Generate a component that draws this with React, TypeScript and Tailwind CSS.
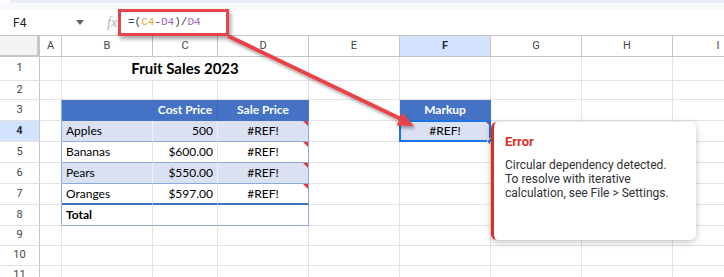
import React from 'react';

const colW = ['w-[22px]', 'w-[91px]', 'w-[65px]', 'w-[91px]', 'w-[91px]', 'w-[91px]', 'w-[91px]', 'w-[91px]', 'w-[91px]'];
const colNames = ['A', 'B', 'C', 'D', 'E', 'F', 'G', 'H', 'I'];
const rowH = ['h-[24px]', 'h-[19px]', 'h-[21px]', 'h-[21px]', 'h-[21px]', 'h-[21px]', 'h-[21px]', 'h-[21px]', 'h-[20px]', 'h-[20px]', 'h-[20px]'];

const fruits: Record<number, [string, string]> = {
  4: ['Apples', '500'],
  5: ['Bananas', '$600.00'],
  6: ['Pears', '$550.00'],
  7: ['Oranges', '$597.00'],
};

const base = 'shrink-0 h-full relative flex items-center px-[4px] whitespace-nowrap border-r border-b border-[#e2e2e2]';

function ErrorMark() {
  return (
    <span className="absolute top-0 right-0 w-0 h-0 border-l-[5px] border-l-transparent border-t-[5px] border-t-[#e53935]" />
  );
}

function Cell({ w, cls = '', children }: { w: string; cls?: string; children?: React.ReactNode }) {
  return <div className={`${base} ${w} ${cls}`}>{children}</div>;
}

function tableEdge(r: number) {
  if (r === 7) return 'border-b-2 border-b-[#4472c4]';
  if (r >= 4 && r <= 8) return 'border-b-[#8eaadb]';
  return '';
}

function Row({ r }: { r: number }) {
  const banded = r === 4 || r === 6;
  const cells: React.ReactNode[] = [];

  // column A
  cells.push(<Cell key="A" w={colW[0]} cls={r >= 3 && r <= 8 ? 'border-r-[#8eaadb]' : ''} />);

  if (r === 1) {
    cells.push(
      <Cell key="BD" w="w-[247px]" cls="justify-center font-bold text-[15px]">
        Fruit Sales 2023
      </Cell>
    );
  } else if (r === 3) {
    cells.push(<Cell key="B" w={colW[1]} cls="bg-[#4472c4] border-b-[#4472c4] border-r-[#4472c4]" />);
    cells.push(
      <Cell key="C" w={colW[2]} cls="bg-[#4472c4] border-b-[#4472c4] border-r-[#3d66b0] justify-center text-white font-bold">
        Cost Price
      </Cell>
    );
    cells.push(
      <Cell key="D" w={colW[3]} cls="bg-[#4472c4] border-b-[#4472c4] border-r-[#4472c4] justify-center text-white font-bold">
        Sale Price
      </Cell>
    );
  } else if (r >= 4 && r <= 7) {
    const [name, cost] = fruits[r];
    const bg = banded ? 'bg-[#d9e1f2] border-r-[#eef1f8]' : '';
    cells.push(
      <Cell key="B" w={colW[1]} cls={`${bg} ${tableEdge(r)}`}>
        {name}
      </Cell>
    );
    cells.push(
      <Cell key="C" w={colW[2]} cls={`${bg} ${tableEdge(r)} justify-end px-[2px]`}>
        {cost}
      </Cell>
    );
    cells.push(
      <Cell key="D" w={colW[3]} cls={`${banded ? 'bg-[#d9e1f2]' : ''} border-r-[#8eaadb] ${tableEdge(r)} justify-center`}>
        #REF!
        <ErrorMark />
      </Cell>
    );
  } else if (r === 8) {
    cells.push(
      <Cell key="B" w={colW[1]} cls={`${tableEdge(r)} font-bold`}>
        Total
      </Cell>
    );
    cells.push(<Cell key="C" w={colW[2]} cls={tableEdge(r)} />);
    cells.push(<Cell key="D" w={colW[3]} cls={`${tableEdge(r)} border-r-[#8eaadb]`} />);
  } else {
    cells.push(<Cell key="B" w={colW[1]} />);
    cells.push(<Cell key="C" w={colW[2]} />);
    cells.push(<Cell key="D" w={colW[3]} />);
  }

  // column E
  cells.push(<Cell key="E" w={colW[4]} />);

  // column F
  if (r === 3) {
    cells.push(
      <Cell key="F" w={colW[5]} cls="bg-[#4472c4] border-b-[#4472c4] border-r-[#4472c4] justify-center text-white font-bold">
        Markup
      </Cell>
    );
  } else if (r === 4) {
    cells.push(
      <Cell key="F" w={colW[5]} cls="bg-[#d9e1f2] justify-center">
        #REF!
        <ErrorMark />
        <span className="absolute -left-px -top-px -right-px -bottom-px border-2 border-[#1a73e8]" />
        <span className="absolute -right-[4px] -bottom-[4px] w-[7px] h-[7px] rounded-full bg-[#1a73e8] border border-white" />
      </Cell>
    );
  } else {
    cells.push(<Cell key="F" w={colW[5]} />);
  }

  cells.push(<Cell key="G" w={colW[6]} />);
  cells.push(<Cell key="H" w={colW[7]} />);
  cells.push(<Cell key="I" w={colW[8]} />);

  const sel = r === 4;
  return (
    <div className={`flex ${rowH[r - 1]}`}>
      <div
        className={`shrink-0 w-[40px] h-full flex items-center justify-center text-[11px] border-r border-b border-r-[#c4c7c5] border-b-[#e2e2e2] font-['Roboto',sans-serif] ${
          sel ? 'bg-[#d3e3fd] font-bold text-[#1f2a44]' : 'text-[#444746]'
        }`}
      >
        {r}
      </div>
      {cells}
    </div>
  );
}

export default function App() {
  return (
    <div className="relative w-[724px] h-[277px] overflow-hidden bg-white text-[12px] text-black font-['Lato',sans-serif]">
      {/* toolbar remnant */}
      <div className="h-[3px] bg-[#e9eef6] ml-[10px]" />
      <div className="h-[7px] bg-[#f8fafd]" />

      {/* formula bar */}
      <div className="h-[25px] flex items-center font-['Roboto',sans-serif]">
        <div className="w-[76px] pl-[13px] text-[12px] text-[#1f1f1f]">F4</div>
        <svg width="8" height="5" viewBox="0 0 8 5" className="shrink-0">
          <path d="M0 0 L8 0 L4 5 Z" fill="#5f6368" />
        </svg>
        <div className="ml-[23px] w-[21px] text-[14px] italic text-[#b0b3b8] font-['Liberation_Serif',serif]">fx</div>
        <div className="text-[11px] font-['Liberation_Mono',monospace] text-[#3c4043]">
          =(<span className="text-[#f29d38]">C4</span>-<span className="text-[#9f5fbe]">D4</span>)/<span className="text-[#9f5fbe]">D4</span>
        </div>
      </div>

      {/* column headers */}
      <div className="flex h-[22px] border-t border-[#c4c7c5] font-['Roboto',sans-serif] text-[11px] text-[#444746]">
        <div className="shrink-0 w-[40px] h-full bg-[#f3f3f3] border-r-[3px] border-b-2 border-[#c4c7c5]" />
        {colNames.map((c, i) => (
          <div
            key={c}
            className={`shrink-0 ${colW[i]} h-full flex items-center justify-center border-r border-b border-[#c4c7c5] ${
              c === 'F' ? 'bg-[#d3e3fd] font-bold text-[#1f2a44]' : ''
            }`}
          >
            {c}
          </div>
        ))}
      </div>

      {/* rows */}
      {Array.from({ length: 11 }, (_, i) => (
        <Row key={i} r={i + 1} />
      ))}

      {/* annotation: red box round formula */}
      <div className="absolute left-[118px] top-[9px] w-[111px] h-[27px] border-[3px] border-[#e8434a] shadow-[2px_3px_4px_rgba(0,0,0,0.35)] z-10" />

      {/* annotation: arrow */}
      <svg className="absolute inset-0 z-20 pointer-events-none" width="724" height="277">
        <defs>
          <filter id="sh" x="-10%" y="-10%" width="130%" height="140%">
            <feDropShadow dx="1.5" dy="2.5" stdDeviation="1.5" floodColor="#000" floodOpacity="0.35" />
          </filter>
        </defs>
        <g filter="url(#sh)">
          <line x1="228" y1="36" x2="401" y2="119" stroke="#e8434a" strokeWidth="4" />
          <polygon points="414,126 396.6,125.4 402.6,112.8" fill="#e8434a" />
        </g>
      </svg>

      {/* error popup */}
      <div className="absolute left-[491px] top-[122px] w-[205px] h-[118px] z-10 bg-white rounded-[6px] border-l-[3px] border-[#d93025] shadow-[0_2px_7px_rgba(0,0,0,0.25)] pl-[11px] pt-[12px] font-['Roboto',sans-serif]">
        <div className="text-[13px] leading-[16px] font-bold text-[#d93025]">Error</div>
        <div className="mt-[8px] text-[12px] leading-[14px] text-[#303134]">
          Circular dependency detected.
          <br />
          To resolve with iterative
          <br />
          calculation, see File &gt; Settings.
        </div>
      </div>
    </div>
  );
}
